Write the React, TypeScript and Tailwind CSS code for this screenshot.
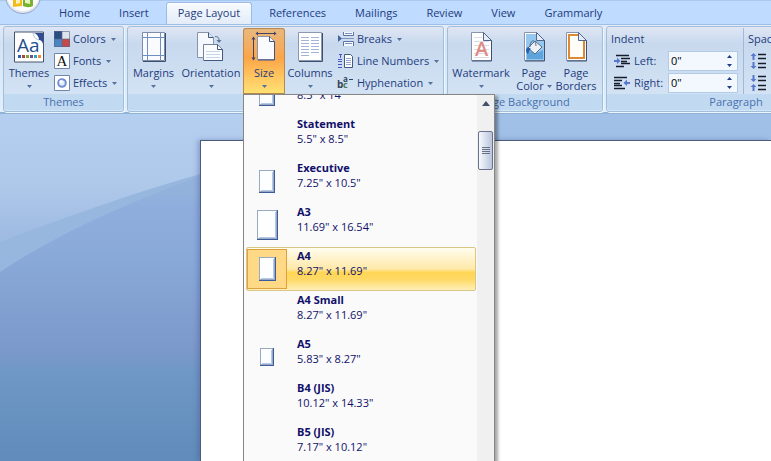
import { useState, type ReactNode } from "react";

const tabs = ["Home", "Insert", "Page Layout", "References", "Mailings", "Review", "View", "Grammarly"];

interface PaperSize {
    name: string;
    size: string;
    icon?: [number, number];
}

const paperSizes: PaperSize[] = [
    { name: "Legal", size: '8.5" x 14"', icon: [16, 26] },
    { name: "Statement", size: '5.5" x 8.5"' },
    { name: "Executive", size: '7.25" x 10.5"', icon: [16, 23] },
    { name: "A3", size: '11.69" x 16.54"', icon: [21, 30] },
    { name: "A4", size: '8.27" x 11.69"', icon: [17, 24] },
    { name: "A4 Small", size: '8.27" x 11.69"' },
    { name: "A5", size: '5.83" x 8.27"', icon: [14, 18] },
    { name: "B4 (JIS)", size: '10.12" x 14.33"' },
    { name: "B5 (JIS)", size: '7.17" x 10.12"' },
];

function Caret() {
    return (
        <svg width="5" height="3" viewBox="0 0 5 3" className="shrink-0 fill-[#55719f]">
            <path d="M0 0h5L2.5 3z" />
        </svg>
    );
}

function Group({ title, className, children }: { title: string; className: string; children: ReactNode }) {
    return (
        <section
            className={`flex shrink-0 flex-col rounded-[3px] border border-[#9fbfdb] bg-linear-to-b from-[#e0e6f4] via-[#c8d9ee] via-20% to-[#d6e6f6] shadow-[1px_1px_0_#eef6fd] ${className}`}
        >
            <div className="flex h-[67px] pt-px">{children}</div>
            <h2 className="h-4 rounded-b-[3px] bg-[#c1daf1] text-center leading-4 text-[#4a70ae]">{title}</h2>
        </section>
    );
}

interface BigButtonProps {
    icon: ReactNode;
    label: string;
    second?: string;
    caret?: boolean;
    className: string;
}

function BigButton({ icon, label, second, caret = true, className }: BigButtonProps) {
    return (
        <button className={`flex shrink-0 flex-col items-center pt-[3px] ${className}`}>
            {icon}
            <span className="mt-[3px] leading-[14px]">{label}</span>
            <span className="flex h-3 items-center gap-[3px] leading-3">
                {second}
                {caret && <Caret />}
            </span>
        </button>
    );
}

function SmallButton({ icon, label }: { icon: ReactNode; label: string }) {
    return (
        <button className="flex h-[22px] items-center gap-[3px]">
            {icon}
            <span>{label}</span>
            <span className="ml-[2px]">
                <Caret />
            </span>
        </button>
    );
}

function ThemesIcon() {
    return (
        <svg width="32" height="32" viewBox="0 0 32 32">
            <path d="M1.500 1h29v30h-29z" fill="#fff" stroke="#44546f" />
            <path d="M21 2h9v11c-1-3-2-4-4-4 0-3-2-6-5-7z" fill="#2f4d94" />
            <path d="M20 2c1 4 2 6 6 7" fill="none" stroke="#a9bcd9" />
            <text x="4" y="21" fontSize="19" fill="#24508f" fontFamily="Open Sans, sans-serif">Aa</text>
            <path d="M5 24h3v3H5z" fill="#2e62a8" />
            <path d="M9 24h3v3H9z" fill="#b3423b" />
            <path d="M13 24h3v3h-3z" fill="#7ea53c" />
            <path d="M17 24h3v3h-3z" fill="#6b4f92" />
            <path d="M21 24h3v3h-3z" fill="#35a0bd" />
            <path d="M25 24h3v3h-3z" fill="#ef8a36" />
        </svg>
    );
}

function ColorsIcon() {
    return (
        <svg width="16" height="16" viewBox="0 0 16 16">
            <path d="M0 0h8v8H0z" fill="#2d4c80" />
            <path d="M8 0h8v8H8z" fill="#dfe3ec" />
            <path d="M0 8h8v8H0z" fill="#4a85c2" />
            <path d="M8 8h8v8H8z" fill="#c5484a" />
            <path d="M.5.5h15v15H.5zM8 0v16M0 8h16" fill="none" stroke="#56688c" strokeOpacity=".6" />
        </svg>
    );
}

function FontsIcon() {
    return (
        <svg width="16" height="16" viewBox="0 0 16 16">
            <path d="M.5.5h15v15H.5z" fill="#fff" stroke="#7088ad" />
            <text x="8" y="13" fontSize="15" textAnchor="middle" fill="#111" fontFamily="Liberation Serif, serif">A</text>
        </svg>
    );
}

function EffectsIcon() {
    return (
        <svg width="16" height="16" viewBox="0 0 16 16">
            <path d="M.5.5h15v15H.5z" fill="#fff" stroke="#7088ad" />
            <circle cx="8" cy="8" r="3.800" fill="#e4edfa" stroke="#718ed4" strokeWidth="2" />
            <circle cx="7" cy="6.500" r="1.500" fill="#fff" />
        </svg>
    );
}

function MarginsIcon() {
    return (
        <svg width="32" height="32" viewBox="0 0 32 32">
            <path d="M5 2h23v28H5z" fill="#f9fbfe" />
            <path d="M4.500 1.500h22v28h-22z" fill="none" stroke="#7d8da9" />
            <path d="M27.500 2v28.500H5" fill="none" stroke="#3f4f70" />
            <path d="M9.500 2v27M22.500 2v27M5 6.500h22M5 24.500h22" stroke="#6d8fc2" />
        </svg>
    );
}

function OrientationIcon() {
    return (
        <svg width="32" height="32" viewBox="0 0 32 32">
            <path d="M2.500 1.500h11l5 5v20h-16z" fill="#f5f8fd" stroke="#8793aa" />
            <path d="M13.500 1.500v5h5" fill="#dbe5f5" stroke="#43577f" />
            <path d="M8.500 13.500h14l5 5v11h-19z" fill="#fbfcfe" stroke="#75849e" />
            <path d="M22.500 13.500v5h5v11H9" fill="none" stroke="#43577f" />
            <path d="M11 20.500h14M11 23.500h14M11 26.500h14" stroke="#c7d4ea" />
            <path d="M20 5.500c3 0 4 1 4 4" fill="none" stroke="#5f7399" />
            <path d="M21.500 9h5L24 12z" fill="#5f7399" />
        </svg>
    );
}

function SizeIcon() {
    return (
        <svg width="32" height="32" viewBox="0 0 32 32">
            <path d="M9.500 5.500h12l5 5v18h-17z" fill="#f9fbff" stroke="#8a95ab" />
            <path d="M21.500 5.500v5h5v18.500H10" fill="none" stroke="#3f5383" />
            <path d="M9 2.500h18M5.500 6v23" stroke="#40416b" />
            <path d="M10 .5v4L7.500 2.500zM26 .5v4l2.500-2zM3.500 8.500h4L5.500 5.500zM3.500 26.500h4l-2 3z" fill="#40416b" />
        </svg>
    );
}

function ColumnsIcon() {
    return (
        <svg width="32" height="32" viewBox="0 0 32 32">
            <path d="M4.500 1.500h23v28h-23z" fill="#fff" stroke="#8b98b0" />
            <path d="M28.500 2v28.500H5" fill="none" stroke="#3f4f70" />
            <path
                d="M7 6.500h8M17 6.500h8M7 9.500h8M17 9.500h8M7 12.500h8M17 12.500h8M7 15.500h8M17 15.500h8M7 18.500h8M17 18.500h8M7 21.500h8M17 21.500h8M7 24.500h8"
                stroke="#a3b2d8"
            />
        </svg>
    );
}

function BreaksIcon() {
    return (
        <svg width="17" height="16" viewBox="0 0 17 16">
            <path d="M6.500 1v3.500h10V1M6.500 15v-4.500h10V15" fill="#f5f9ff" stroke="#5a75a5" />
            <path d="M5 7.500h12M8 2.500h7M8 12.500h7" stroke="#7c93bc" />
            <path d="M1 4l4 3.500L1 11z" fill="#44649d" />
        </svg>
    );
}

function LineNumbersIcon() {
    return (
        <svg width="17" height="16" viewBox="0 0 17 16">
            <path d="M7.500 1.500h6l2 2v11h-8z" fill="#fff" stroke="#44597f" />
            <path d="M9 5.500h5M9 7.500h5M9 9.500h5M9 11.500h5" stroke="#92a5c7" />
            <path d="M2 1.500h3M3.500 1v4M1 6.500h4M1 8.500h4M1 11.500h4M1 14.500h4" stroke="#4b55c0" />
        </svg>
    );
}

function HyphenationIcon() {
    return (
        <svg width="17" height="16" viewBox="0 0 17 16" fontFamily="Open Sans, sans-serif" fontWeight="700">
            <text x="0" y="13" fontSize="10" fill="#31465b">b</text>
            <text x="6" y="13" fontSize="9" fill="#4d7a4a">c</text>
            <text x="6" y="7" fontSize="8" fill="#31465b">a</text>
            <path d="M12 4.500h4" stroke="#31465b" />
        </svg>
    );
}

function PageOutline({ children }: { children: ReactNode }) {
    return (
        <svg width="32" height="32" viewBox="0 0 32 32">
            <path d="M6.500 1.500h12l8 8v20h-20z" fill="#fff" stroke="#8794ac" />
            {children}
            <path d="M18.500 1.500v8h8z" fill="#e4ecf7" stroke="#53668a" />
            <path d="M26.500 9.500v20.500H7" fill="none" stroke="#3f5173" />
        </svg>
    );
}

function WatermarkIcon() {
    return (
        <PageOutline>
            <path d="M9 6.500h8M9 10.500h15M9 14.500h15M9 18.500h15M9 22.500h15M9 26.500h15" stroke="#d8dde8" />
            <text x="16.500" y="25" fontSize="20" fontWeight="600" textAnchor="middle" fill="#e08a84" fontFamily="Open Sans, sans-serif">A</text>
        </PageOutline>
    );
}

function PageColorIcon() {
    return (
        <PageOutline>
            <path d="M8 3h11l7 7v19H8z" fill="#94c8f0" />
            <path d="M9 21c4-3 7 4 16-2v9H9z" fill="#5ea5dd" />
            <path d="M10 17l7-7 7 6-7 7z" fill="#eef2f8" stroke="#596a83" />
            <path d="M12 16c0-8 6-8 6-1" fill="none" stroke="#596a83" />
            <path d="M10 16c-3 2-2 6 0 7 1-2 1-4 3-5z" fill="#245fa8" />
        </PageOutline>
    );
}

function PageBordersIcon() {
    return (
        <PageOutline>
            <path d="M9 4h10l5 6v17H9z" fill="#fffdf8" stroke="#dc8a35" strokeWidth="2" />
        </PageOutline>
    );
}

function IndentIcon({ side }: { side: "left" | "right" }) {
    return side === "left" ? (
        <svg width="16" height="14" viewBox="0 0 16 14">
            <path d="M2 1.500h13M7 4.500h9M7 7.500h6M7 9.500h9M2 12.500h8" stroke="#161c2b" strokeWidth="1.500" />
            <path d="M0 6h3V3.500L6.500 7 3 10V8H0z" fill="#5877ce" />
        </svg>
    ) : (
        <svg width="16" height="14" viewBox="0 0 16 14">
            <path d="M0 1.500h13M0 4.500h8M0 7.500h6M0 9.500h8M0 12.500h11" stroke="#161c2b" strokeWidth="1.500" />
            <path d="M16 6h-3V3.500L9.500 7l3.500 3V8h3z" fill="#5877ce" />
        </svg>
    );
}

function SpacingIcon({ inward = false }: { inward?: boolean }) {
    return (
        <svg width="16" height="16" viewBox="0 0 16 16">
            <path d="M8 1.500h8M8 5.500h8M8 10.500h8M8 14.500h8" stroke="#161c2b" strokeWidth="1.500" />
            {inward ? (
                <path d="M3.500 7l3-3h-2V0h-2v4h-2zM3.500 9l3 3h-2v4h-2v-4h-2z" fill="#5877ce" />
            ) : (
                <path d="M3.500 0l3 3h-2v4h-2V3h-2zM3.500 16l3-3h-2V9h-2v4h-2z" fill="#5877ce" />
            )}
        </svg>
    );
}

function IndentField({ side, label }: { side: "left" | "right"; label: string }) {
    const [value, setValue] = useState('0"');

    return (
        <div className="flex h-[22px] items-center">
            <IndentIcon side={side} />
            <label htmlFor={side} className="w-[38px] pl-1">
                {label}
            </label>
            <div className="flex h-5 w-[70px] border border-[#b3cae6] bg-[#f3f8fe]">
                <input
                    id={side}
                    value={value}
                    onChange={(e) => setValue(e.target.value)}
                    className="min-w-0 flex-1 pl-[2px] text-black outline-none"
                />
                <div className="flex w-4 flex-col">
                    <button aria-label={`Increase ${side} indent`} className="flex flex-1 items-center justify-center">
                        <svg width="5" height="3" viewBox="0 0 5 3" className="fill-[#1d3f87]">
                            <path d="M0 3h5L2.500 0z" />
                        </svg>
                    </button>
                    <button aria-label={`Decrease ${side} indent`} className="flex flex-1 items-center justify-center">
                        <svg width="5" height="3" viewBox="0 0 5 3" className="fill-[#1d3f87]">
                            <path d="M0 0h5L2.500 3z" />
                        </svg>
                    </button>
                </div>
            </div>
        </div>
    );
}

function PaperIcon({ width, height }: { width: number; height: number }) {
    return (
        <svg width={width} height={height}>
            <rect width={width} height={height} fill="#3d5c9b" />
            <rect x="0.500" y="0.500" width={width - 2} height={height - 2} fill="#fdfeff" stroke="#9aa9c2" />
            <path d={`M${width - 2.5} 2V${height - 2.5}H2`} fill="none" stroke="#b5caea" />
        </svg>
    );
}

function SizeMenu() {
    const [selected, setSelected] = useState("A4");

    return (
        <div className="absolute top-full left-0 z-10 flex w-[252px] border border-[#868686] bg-[#fafafa] text-[#10106a] shadow-[3px_2px_3px_rgba(0,0,0,0.35)]">
            <div className="min-w-0 flex-1 overflow-hidden pl-[2px]">
                <ul className="-mt-6">
                    {paperSizes.map((paper) => (
                        <li key={paper.name}>
                            <button
                                onClick={() => setSelected(paper.name)}
                                className={`flex h-11 w-full items-center rounded-xs border text-left ${
                                    paper.name === selected
                                        ? "border-[#d9c584] bg-[linear-gradient(#fffdf0,#ffe9a8_50%,#ffd654_58%,#ffd966_75%,#fff0b8)]"
                                        : "border-transparent"
                                }`}
                            >
                                <span
                                    className={`flex h-10 w-10 shrink-0 items-center justify-center border ${
                                        paper.name === selected ? "border-[#e0a040] bg-[#ffd985]" : "border-transparent"
                                    }`}
                                >
                                    {paper.icon && <PaperIcon width={paper.icon[0]} height={paper.icon[1]} />}
                                </span>
                                <span className="flex flex-1 flex-col pb-3 pl-[10px] leading-[15px]">
                                    <strong className="font-bold">{paper.name}</strong>
                                    <span>{paper.size}</span>
                                </span>
                            </button>
                        </li>
                    ))}
                </ul>
            </div>
            <div className="ml-px flex w-[17px] flex-col items-center bg-[#f0f0f0]">
                <button aria-label="Scroll up" className="flex h-[17px] w-full items-center justify-center">
                    <svg width="8" height="5" viewBox="0 0 8 5" className="fill-[#44506b]">
                        <path d="M0 5h8L4 0z" />
                    </svg>
                </button>
                <div className="mt-[19px] flex h-[39px] w-[15px] flex-col items-center justify-center gap-px rounded-xs border border-[#68708a] bg-linear-to-r from-[#f7f9fd] to-[#b9c5dc]">
                    <span className="h-px w-2 bg-[#68708a]" />
                    <span className="h-px w-2 bg-[#68708a]" />
                    <span className="h-px w-2 bg-[#68708a]" />
                    <span className="h-px w-2 bg-[#68708a]" />
                </div>
            </div>
        </div>
    );
}

function OfficeButton() {
    return (
        <button aria-label="Office Button" className="absolute -top-[23px] left-1">
            <svg width="38" height="38" viewBox="0 0 38 38">
                <circle cx="19" cy="19" r="17.500" fill="#e3e7ef" stroke="#8fa4c6" />
                <circle cx="19" cy="18" r="16" fill="#fbfcfd" />
                <path d="M9 19h9v10l-9 1z" fill="#f2bd1c" />
                <path d="M12 22h4v4l-4 1z" fill="#fff1b8" />
                <path d="M19 19l10 3v7c-4 2-7 1-10 0z" fill="#77b22a" />
                <path d="M21 22l5 1v4l-5-1z" fill="#e4f4c7" />
            </svg>
        </button>
    );
}

function Backdrop() {
    return (
        <svg
            viewBox="0 0 400 347"
            preserveAspectRatio="none"
            className="absolute top-0 left-0 h-full w-[400px]"
            aria-hidden="true"
        >
            <defs>
                <linearGradient id="sky" x2="0" y2="1">
                    <stop offset="0" stopColor="#b5cff1" />
                    <stop offset=".2" stopColor="#afc9ea" />
                    <stop offset=".35" stopColor="#9fbbe2" />
                </linearGradient>
                <linearGradient id="deep" x2="0" y2="1">
                    <stop offset="0" stopColor="#95b5dc" />
                    <stop offset=".2" stopColor="#92b2dc" />
                    <stop offset=".24" stopColor="#8faede" />
                    <stop offset=".4" stopColor="#89a9d9" />
                    <stop offset=".67" stopColor="#7b99ca" />
                    <stop offset=".73" stopColor="#7098c6" />
                    <stop offset="1" stopColor="#608bba" />
                </linearGradient>
            </defs>
            <path d="M0 0h400v347H0z" fill="url(#sky)" />
            <path d="M0 128C60 105 130 80 200 60L400 10v337H0z" fill="#98b7df" />
            <path d="M0 158C60 118 130 88 200 62L400 12v335H0z" fill="url(#deep)" />
        </svg>
    );
}

export default function App() {
    const [activeTab, setActiveTab] = useState("Page Layout");

    return (
        <div className="flex h-screen flex-col overflow-hidden bg-[#bfdbff] font-['Open_Sans','Segoe_UI',sans-serif] text-[11px] text-[#1e3c7d]">
            <header className="relative z-10">
                <OfficeButton />
                <nav className="flex h-6 items-end gap-[5px] border-t border-[#a9c9f0] pl-[47px]">
                    {tabs.map((tab) => (
                        <button
                            key={tab}
                            onClick={() => setActiveTab(tab)}
                            className={`h-[22px] shrink-0 rounded-t-[3px] border border-b-0 px-[11px] pb-px ${
                                tab === activeTab
                                    ? "border-[#9cbce6] bg-linear-to-b from-[#f8fbff] to-[#e3ecf8] shadow-[inset_0_1px_0_white]"
                                    : "border-transparent"
                            }`}
                        >
                            {tab}
                        </button>
                    ))}
                </nav>
                <div className="flex h-[90px] gap-[3px] border-t border-b-2 border-t-[#9cbfe8] border-b-[#8fb3d6] bg-linear-to-b from-[#e6ebf6] via-[#d5e3f4] via-20% to-[#e2f0fd] pt-px pl-[3px]">
                    <Group title="Themes" className="w-[121px]">
                        <BigButton icon={<ThemesIcon />} label="Themes" className="w-[50px]" />
                        <div className="flex flex-col">
                            <SmallButton icon={<ColorsIcon />} label="Colors" />
                            <SmallButton icon={<FontsIcon />} label="Fonts" />
                            <SmallButton icon={<EffectsIcon />} label="Effects" />
                        </div>
                    </Group>
                    <Group title="Page Setup" className="w-[317px]">
                        <BigButton icon={<MarginsIcon />} label="Margins" className="w-[51px]" />
                        <BigButton icon={<OrientationIcon />} label="Orientation" className="w-16" />
                        <div className="relative">
                            <BigButton
                                icon={<SizeIcon />}
                                label="Size"
                                className="h-full w-[42px] rounded-t-[3px] bg-linear-to-b from-[#e8b87e] via-[#fba548] via-45% to-[#ffe375] shadow-[inset_0_0_0_1px_#b98a4f]"
                            />
                            <SizeMenu />
                        </div>
                        <BigButton icon={<ColumnsIcon />} label="Columns" className="w-[50px]" />
                        <div className="flex flex-col pl-[2px]">
                            <SmallButton icon={<BreaksIcon />} label="Breaks" />
                            <SmallButton icon={<LineNumbersIcon />} label="Line Numbers" />
                            <SmallButton icon={<HyphenationIcon />} label="Hyphenation" />
                        </div>
                    </Group>
                    <Group title="Page Background" className="w-[156px]">
                        <BigButton icon={<WatermarkIcon />} label="Watermark" className="w-[66px]" />
                        <BigButton icon={<PageColorIcon />} label="Page" second="Color" className="w-10" />
                        <BigButton icon={<PageBordersIcon />} label="Page" second="Borders" caret={false} className="w-11" />
                    </Group>
                    <Group title="Paragraph" className="w-[260px]">
                        <div className="flex flex-col pl-1">
                            <h3 className="h-[22px] leading-[22px]">Indent</h3>
                            <div className="pl-[3px]">
                                <IndentField side="left" label="Left:" />
                                <IndentField side="right" label="Right:" />
                            </div>
                        </div>
                        <div className="ml-[5px] flex flex-col border-l border-[#9fb9db] pl-1">
                            <h3 className="h-[22px] leading-[22px]">Spacing</h3>
                            <div className="flex h-[22px] items-center gap-2 pl-[2px]">
                                <SpacingIcon />
                                <span>Before:</span>
                            </div>
                            <div className="flex h-[22px] items-center gap-2 pl-[2px]">
                                <SpacingIcon inward />
                                <span>After:</span>
                            </div>
                        </div>
                    </Group>
                </div>
            </header>
            <main className="relative flex flex-1 bg-[#a0c0e7] pt-[26px] pl-[200px]">
                <Backdrop />
                <div className="relative flex-1 border-t border-l border-[#4c5b78] bg-white shadow-[-2px_0_5px_rgba(60,80,150,0.4)]" />
            </main>
        </div>
    );
}
